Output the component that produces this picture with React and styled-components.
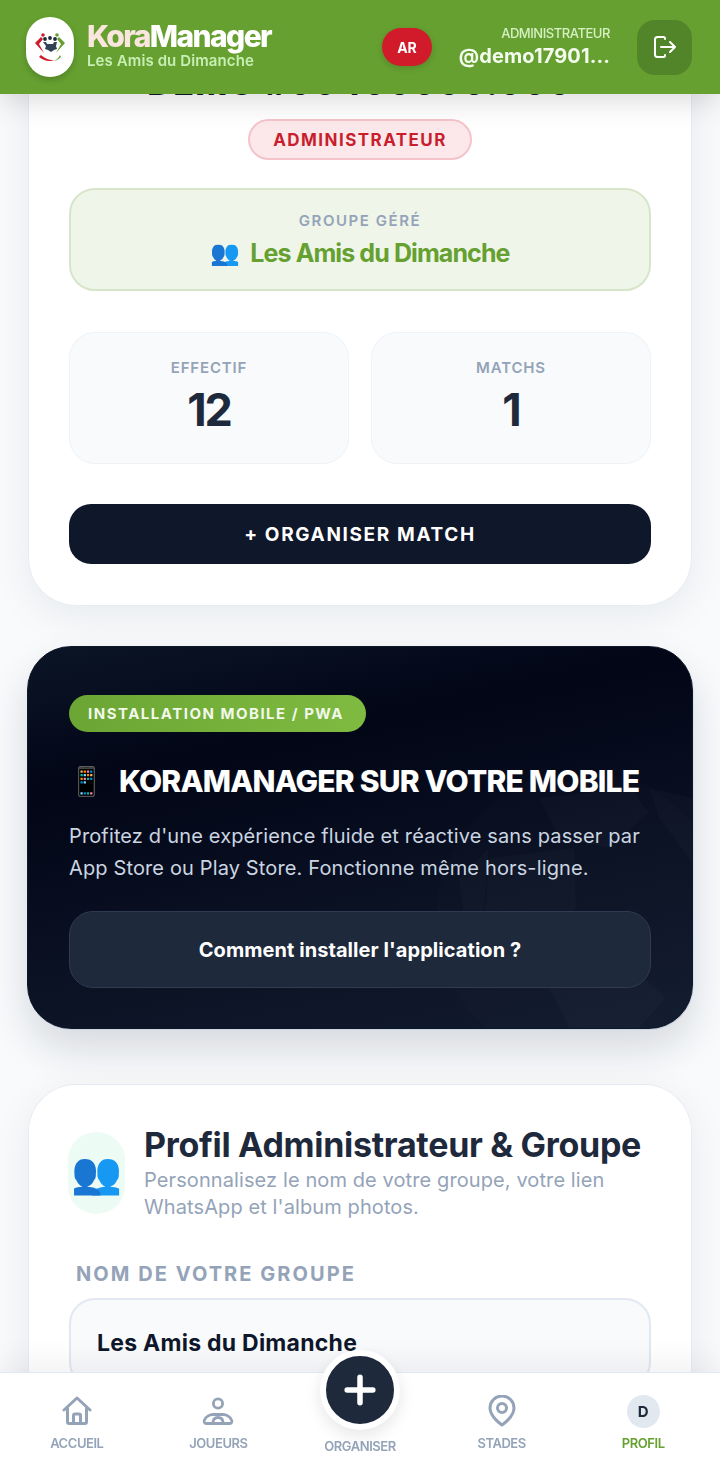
import React from 'react'
import styled, { createGlobalStyle } from 'styled-components'
import { Plus } from 'lucide-react'

const GlobalStyle = createGlobalStyle`
    * { box-sizing: border-box; }
    html, body { margin: 0; padding: 0; height: 100%; overflow: hidden; }
    body {
        background: #f8fafc;
        font-family: Inter, "Noto Sans", sans-serif;
        color: #1e293b;
    }
`

const Page = styled.div`
    height: 100vh;
    overflow: hidden;
    position: relative;
    background: #f8fafc;
`
const Header = styled.header`
    position: fixed;
    top: 0;
    left: 0;
    right: 0;
    z-index: 10;
    height: 94px;
    background: #65a030;
    display: flex;
    align-items: center;
    padding: 0 28px 0 26px;
    box-shadow: 0 4px 30px rgba(0, 0, 0, 0.17);
`
const LogoBadge = styled.div`
    width: 48px;
    height: 60px;
    border-radius: 24px;
    background: #fff;
    display: flex;
    align-items: center;
    justify-content: center;
    box-shadow: 0 3px 6px rgba(0, 0, 0, 0.18);
    margin-right: 13px;
    flex-shrink: 0;
`
const Brand = styled.div`
    display: flex;
    flex-direction: column;
    margin-top: -5px;
`
const BrandName = styled.div`
    font-size: 30px;
    line-height: 32px;
    font-weight: 800;
    letter-spacing: -1.6px;
    color: #fff;
    span { color: #fbe6df; }
`
const BrandSub = styled.div`
    font-size: 15px;
    line-height: 18px;
    font-weight: 600;
    letter-spacing: 0.1px;
    color: #c7efb4;
`
const HeaderRight = styled.div`
    margin-left: auto;
    display: flex;
    align-items: center;
`
const RolePill = styled.div`
    width: 50px;
    height: 38px;
    border-radius: 19px;
    background: #d11a2a;
    color: #fff;
    font-size: 14px;
    font-weight: 700;
    display: flex;
    align-items: center;
    justify-content: center;
    box-shadow: 0 2px 6px rgba(0, 0, 0, 0.15);
`
const UserBox = styled.div`
    width: 178px;
    margin-right: 27px;
    text-align: right;
    display: flex;
    flex-direction: column;
    align-items: flex-end;
`
const UserRole = styled.div`
    font-size: 13px;
    line-height: 16px;
    font-weight: 500;
    letter-spacing: -0.45px;
    color: #d6f0c4;
`
const UserName = styled.div`
    font-size: 20px;
    line-height: 26px;
    font-weight: 700;
    letter-spacing: 0.1px;
    color: #f4fbef;
    margin-top: 2px;
    white-space: nowrap;
`
const LogoutButton = styled.button`
    width: 55px;
    height: 55px;
    border: 0;
    border-radius: 18px;
    background: #528429;
    color: #fff;
    display: flex;
    align-items: center;
    justify-content: center;
    padding: 0;
`
const Content = styled.main`
    display: flex;
    flex-direction: column;
    margin-top: -120px;
    padding: 0 27px;
`
const Card = styled.section`
    background: #fff;
    border: 1px solid #e8ecf2;
    border-radius: 48px;
    padding: 40px 40px 41px;
    margin: 0 1px;
    box-shadow: 0 10px 40px rgba(15, 23, 42, 0.07);
`
const HeroCard = styled(Card)`
    display: flex;
    flex-direction: column;
    align-items: center;
    padding-top: 0;
    height: 726px;
    justify-content: flex-end;
`
const HeroTitle = styled.h1`
    margin: 0 0 18px;
    font-size: 34px;
    line-height: 36px;
    font-weight: 800;
    letter-spacing: 1.3px;
    color: #0f172a;
    white-space: nowrap;
`
const RoleBadge = styled.div`
    height: 41px;
    padding: 0 23px;
    border-radius: 21px;
    background: #fce8ea;
    border: 2px solid #f4c4ca;
    color: #c81e2d;
    font-size: 17px;
    font-weight: 700;
    letter-spacing: 1.45px;
    display: flex;
    align-items: center;
`
const GroupBox = styled.div`
    align-self: stretch;
    height: 103px;
    margin-top: 28px;
    border-radius: 26px;
    background: #eff5e9;
    border: 2px solid #d7e6c8;
    display: flex;
    flex-direction: column;
    align-items: center;
    padding-top: 22px;
`
const MutedLabel = styled.div`
    font-size: 15px;
    line-height: 17px;
    font-weight: 600;
    letter-spacing: ${p => p.$spacing || '1.55px'};
    color: #94a3b8;
`
const GroupName = styled.div`
    margin-top: 9px;
    font-size: 25px;
    line-height: 30px;
    font-weight: 700;
    letter-spacing: -0.9px;
    color: #65a030;
    display: flex;
    align-items: center;
    gap: 10px;
`
const Emoji = styled.span`
    font-family: "Noto Color Emoji", sans-serif;
    font-size: ${p => p.$size || 22}px;
    letter-spacing: 0;
`
const StatGrid = styled.div`
    align-self: stretch;
    display: grid;
    grid-template-columns: 1fr 1fr;
    gap: 22px;
    margin-top: 41px;
`
const StatCard = styled.div`
    height: 132px;
    border-radius: 26px;
    background: #f8fafc;
    border: 1px solid #eff3f7;
    display: flex;
    flex-direction: column;
    align-items: center;
    padding-top: 26px;
`
const StatValue = styled.div`
    font-size: 45px;
    line-height: 50px;
    font-weight: 700;
    letter-spacing: -2px;
    color: #1e293b;
    margin-top: 9px;
`
const OrganizeButton = styled.button`
    align-self: stretch;
    height: 60px;
    margin-top: 40px;
    border: 0;
    border-radius: 22px;
    background: #0f172a;
    color: #fff;
    font-family: inherit;
    font-size: 19px;
    font-weight: 700;
    letter-spacing: 1.65px;
`
const InstallCard = styled.section`
    position: relative;
    overflow: hidden;
    height: 383px;
    margin-top: 40px;
    border-radius: 44px;
    border: 1px solid #0f172a;
    background: linear-gradient(168deg, #0b1526 0%, #020617 28%, #0a1122 62%, #121a2e 100%);
    padding: 48px 41px 0;
    box-shadow: 0.5px 1px 0 #cbd5e1, 0 20px 40px rgba(15, 23, 42, 0.14);
`
const BallMark = styled.svg`
    position: absolute;
    right: -40px;
    bottom: -40px;
    width: 300px;
    height: 300px;
`
const InstallBody = styled.div`
    position: relative;
`
const PwaBadge = styled.div`
    display: inline-flex;
    align-items: center;
    height: 37px;
    padding: 0 22px 0 19px;
    border-radius: 19px;
    background: linear-gradient(90deg, #6ba534, #7fbb41);
    color: #f2f8ea;
    font-size: 15px;
    font-weight: 700;
    letter-spacing: 1.5px;
`
const InstallTitle = styled.h2`
    margin: 29px 0 0;
    height: 40px;
    display: flex;
    align-items: center;
    gap: 15px;
    font-size: 30px;
    font-weight: 800;
    letter-spacing: -0.8px;
    color: #fff;
    white-space: nowrap;
`
const InstallText = styled.p`
    margin: 19px 0 0;
    font-size: 20px;
    line-height: 32px;
    font-weight: 400;
    letter-spacing: 0.135px;
    color: #cbd5e1;
    white-space: nowrap;
`
const HelpButton = styled.button`
    display: block;
    width: 100%;
    height: 77px;
    margin-top: 27px;
    border: 1px solid #2f3b50;
    border-radius: 24px;
    background: #1e293b;
    color: #fff;
    font-family: inherit;
    font-size: 20px;
    font-weight: 700;
    letter-spacing: 0.06px;
`
const ProfileCard = styled(Card)`
    margin-top: 55px;
    padding-top: 40px;
    border-bottom: 0;
`
const ProfileHead = styled.div`
    display: flex;
    align-items: center;
    gap: 19px;
    margin-left: -1px;
`
const ProfileIcon = styled.div`
    width: 57px;
    height: 82px;
    border-radius: 28px;
    background: #ecfbf4;
    display: flex;
    align-items: center;
    justify-content: center;
    flex-shrink: 0;
`
const ProfileTitle = styled.h2`
    margin: 0;
    font-size: 34px;
    line-height: 40px;
    font-weight: 700;
    letter-spacing: -0.3px;
    color: #1e293b;
    white-space: nowrap;
`
const ProfileText = styled.p`
    margin: 2px 0 0;
    font-size: 20px;
    line-height: 27px;
    letter-spacing: 0.1px;
    color: #94a3b8;
    white-space: nowrap;
`
const FieldLabel = styled.label`
    display: block;
    margin: 41px 0 0 7px;
    font-size: 20px;
    line-height: 24px;
    font-weight: 700;
    letter-spacing: 2.05px;
    color: #94a3b8;
`
const FieldBox = styled.div`
    margin-top: 12px;
    height: 90px;
    padding: 27px 26px;
    border-radius: 26px;
    background: #f8fafc;
    border: 2px solid #e2e8f0;
    font-size: 23px;
    line-height: 32px;
    font-weight: 700;
    letter-spacing: 0.25px;
    color: #0f172a;
`
const BottomNav = styled.nav`
    position: fixed;
    left: 0;
    right: 0;
    bottom: 0;
    z-index: 10;
    height: 101px;
    padding: 0 6px;
    background: #fff;
    border-top: 1px solid #e2e8f0;
    display: grid;
    grid-template-columns: repeat(5, 1fr);
    box-shadow: 0 -10px 30px rgba(15, 23, 42, 0.06);
`
const NavItem = styled.div`
    display: flex;
    flex-direction: column;
    align-items: center;
    padding-top: 21px;
    color: #94a3b8;
`
const NavIconSlot = styled.div`
    height: 34px;
    display: flex;
    align-items: center;
    justify-content: center;
`
const NavLabel = styled.div`
    margin-top: 7px;
    font-size: 13px;
    line-height: 16px;
    font-weight: 600;
    letter-spacing: -0.45px;
    color: ${p => p.$active ? '#65a030' : '#94a3b8'};
`
const FabItem = styled.div`
    position: relative;
    display: flex;
    flex-direction: column;
    align-items: center;
    padding-top: 58px;
`
const Fab = styled.div`
    position: absolute;
    top: -23px;
    left: 50%;
    transform: translateX(-50%);
    width: 80px;
    height: 80px;
    border-radius: 50%;
    background: #1e293b;
    border: 6px solid #fff;
    color: #fff;
    display: flex;
    align-items: center;
    justify-content: center;
    box-shadow: 0 6px 16px rgba(15, 23, 42, 0.1);
`
const ProfileDot = styled.div`
    width: 33px;
    height: 33px;
    border-radius: 50%;
    background: #e2e8f0;
    color: #1e293b;
    font-size: 15px;
    font-weight: 700;
    display: flex;
    align-items: center;
    justify-content: center;
`

const LogoMark = () => (
    <svg width="34" height="34" viewBox="0 0 34 34">
        <path d="M2 13 L8 7 L10 9 L6 14 L11 23 Z" fill="#d11a2a" />
        <path d="M32 13 L26 7 L24 9 L28 14 L23 23 Z" fill="#65a030" />
        <circle cx="10" cy="5" r="1.8" fill="#d11a2a" />
        <circle cx="24" cy="5" r="1.8" fill="#65a030" />
        <circle cx="12" cy="9" r="1.9" fill="#1e293b" />
        <circle cx="17" cy="8" r="1.9" fill="#1e293b" />
        <circle cx="22" cy="9" r="1.9" fill="#1e293b" />
        <path d="M10 12 h3 l1 2 h6 l1 -2 h3 l-1 4 1 3 -3 1 -3 2 -3 -2 -3 -1 1 -3 Z" fill="#334155" />
        <path d="M6 27 Q14 33 21 30 Q14 30.5 8 25 Z" fill="#d11a2a" />
        <path d="M28 27 Q24 31 20 31 Q25 30 27 25 Z" fill="#65a030" />
    </svg>
)

const LogoutIcon = () => (
    <svg width="24" height="24" viewBox="0 0 24 24" fill="none" stroke="currentColor" strokeWidth="2" strokeLinecap="round" strokeLinejoin="round">
        <path d="M12 4 V3.5 A1.5 1.5 0 0 0 10.5 2 H4.5 A2.5 2.5 0 0 0 2 4.5 V19.5 A2.5 2.5 0 0 0 4.5 22 H10.5 A1.5 1.5 0 0 0 12 20.5 V20" />
        <path d="M8 12 H22 M17 7 L22 12 L17 17" />
    </svg>
)

const HomeIcon = () => (
    <svg width="30" height="30" viewBox="0 0 30 30" fill="none" stroke="currentColor" strokeWidth="3" strokeLinecap="round" strokeLinejoin="round">
        <path d="M2 14 L15 2 L28 14" />
        <path d="M5.5 12 V26 A1.5 1.5 0 0 0 7 27.5 H23 A1.5 1.5 0 0 0 24.5 26 V12" />
        <path d="M11.5 27 V19.5 A1.5 1.5 0 0 1 13 18 H17 A1.5 1.5 0 0 1 18.5 19.5 V27" />
    </svg>
)

const PlayersIcon = () => (
    <svg width="32" height="28" viewBox="0 0 32 28" fill="none" stroke="currentColor" strokeWidth="2.8" strokeLinecap="round" strokeLinejoin="round">
        <circle cx="16" cy="6.5" r="4.6" />
        <path d="M4 26.5 C2 26.5 1.8 24 2.5 23 C4 19.5 8 17.5 11 17.5 H21 C24 17.5 28 19.5 29.5 23 C30.2 24 30 26.5 28 26.5 Z" />
        <path d="M11 26 C11 22.5 13 20.5 16 20.5 C19 20.5 21 22.5 21 26" />
    </svg>
)

const PinIcon = () => (
    <svg width="28" height="32" viewBox="0 0 28 32" fill="none" stroke="currentColor" strokeWidth="3" strokeLinejoin="round">
        <path d="M14 30 C14 30 2 22 2 13 A12 12 0 0 1 26 13 C26 22 14 30 14 30 Z" />
        <circle cx="14" cy="13" r="4.5" />
    </svg>
)

const BallWatermark = () => (
    <BallMark viewBox="0 0 300 300">
        <circle cx="150" cy="150" r="146" fill="rgba(255,255,255,0.01)" />
        <g fill="rgba(255,255,255,0.018)">
            <path d="M107 30 L200 20 L217 45 L177 80 L127 70 Z" />
            <path d="M217 20 L260 30 L287 130 L257 90 L227 50 Z" />
            <path d="M57 80 L50 160 L37 190 L27 110 Z" />
            <path d="M57 90 L142 80 L144 140 L87 190 L52 150 Z" />
            <path d="M117 220 L207 205 L234 230 L207 260 L137 260 Z" />
        </g>
    </BallMark>
)

const App = () => {
    return (
        <Page>
            <GlobalStyle />
            <Header>
                <LogoBadge><LogoMark /></LogoBadge>
                <Brand>
                    <BrandName><span>Kora</span>Manager</BrandName>
                    <BrandSub>Les Amis du Dimanche</BrandSub>
                </Brand>
                <HeaderRight>
                    <RolePill>AR</RolePill>
                    <UserBox>
                        <UserRole>ADMINISTRATEUR</UserRole>
                        <UserName>@demo17901...</UserName>
                    </UserBox>
                    <LogoutButton aria-label="Déconnexion"><LogoutIcon /></LogoutButton>
                </HeaderRight>
            </Header>

            <Content>
                <HeroCard>
                    <HeroTitle>DEMO #00400000.000</HeroTitle>
                    <RoleBadge>ADMINISTRATEUR</RoleBadge>
                    <GroupBox>
                        <MutedLabel>GROUPE GÉRÉ</MutedLabel>
                        <GroupName><Emoji $size={24}>👥</Emoji>Les Amis du Dimanche</GroupName>
                    </GroupBox>
                    <StatGrid>
                        <StatCard>
                            <MutedLabel $spacing="0.85px">EFFECTIF</MutedLabel>
                            <StatValue>12</StatValue>
                        </StatCard>
                        <StatCard>
                            <MutedLabel $spacing="0.85px">MATCHS</MutedLabel>
                            <StatValue>1</StatValue>
                        </StatCard>
                    </StatGrid>
                    <OrganizeButton>+ ORGANISER MATCH</OrganizeButton>
                </HeroCard>

                <InstallCard>
                    <BallWatermark />
                    <InstallBody>
                        <PwaBadge>INSTALLATION MOBILE / PWA</PwaBadge>
                        <InstallTitle><Emoji $size={28}>📱</Emoji>KORAMANAGER SUR VOTRE MOBILE</InstallTitle>
                        <InstallText>
                            Profitez d'une expérience fluide et réactive sans passer par<br />
                            App Store ou Play Store. Fonctionne même hors-ligne.
                        </InstallText>
                        <HelpButton>Comment installer l'application ?</HelpButton>
                    </InstallBody>
                </InstallCard>

                <ProfileCard>
                    <ProfileHead>
                        <ProfileIcon><Emoji $size={41}>👥</Emoji></ProfileIcon>
                        <div>
                            <ProfileTitle>Profil Administrateur &amp; Groupe</ProfileTitle>
                            <ProfileText>
                                Personnalisez le nom de votre groupe, votre lien<br />
                                WhatsApp et l'album photos.
                            </ProfileText>
                        </div>
                    </ProfileHead>
                    <FieldLabel>NOM DE VOTRE GROUPE</FieldLabel>
                    <FieldBox>Les Amis du Dimanche</FieldBox>
                </ProfileCard>
            </Content>

            <BottomNav>
                <NavItem>
                    <NavIconSlot><HomeIcon /></NavIconSlot>
                    <NavLabel>ACCUEIL</NavLabel>
                </NavItem>
                <NavItem>
                    <NavIconSlot><PlayersIcon /></NavIconSlot>
                    <NavLabel>JOUEURS</NavLabel>
                </NavItem>
                <FabItem>
                    <Fab><Plus size={44} strokeWidth={3} /></Fab>
                    <NavLabel>ORGANISER</NavLabel>
                </FabItem>
                <NavItem>
                    <NavIconSlot><PinIcon /></NavIconSlot>
                    <NavLabel>STADES</NavLabel>
                </NavItem>
                <NavItem>
                    <NavIconSlot><ProfileDot>D</ProfileDot></NavIconSlot>
                    <NavLabel $active>PROFIL</NavLabel>
                </NavItem>
            </BottomNav>
        </Page>
    )
}

export default App
